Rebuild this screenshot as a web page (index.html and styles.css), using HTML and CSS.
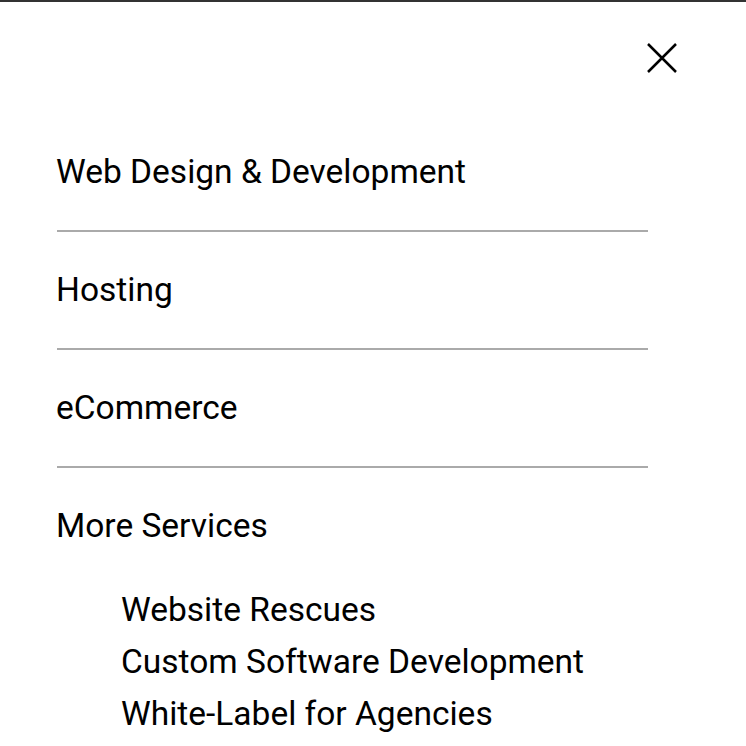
FILE: index.html
```html
<!DOCTYPE html>
<html lang="en">
<head>
  <meta charset="UTF-8">
  <meta name="viewport" content="width=device-width, initial-scale=1.0">
  <title>Menu</title>
  <link rel="stylesheet" href="styles.css">
</head>
<body>
  <div class="menu-panel">
    <div class="menu-top">
      <button class="close-btn" aria-label="Close menu">
        <svg width="32" height="32" viewBox="0 0 32 32">
          <path d="M2 2 L30 30 M30 2 L2 30" stroke="#000" stroke-width="2.5" fill="none"/>
        </svg>
      </button>
    </div>

    <ul class="menu-list">
      <li class="menu-item"><a href="#">Web Design &amp; Development</a></li>
      <li class="menu-item"><a href="#">Hosting</a></li>
      <li class="menu-item"><a href="#">eCommerce</a></li>
      <li class="menu-item last">
        <a href="#">More Services</a>
        <ul class="sub-list">
          <li><a href="#">Website Rescues</a></li>
          <li><a href="#">Custom Software Development</a></li>
          <li><a href="#">White-Label for Agencies</a></li>
        </ul>
      </li>
    </ul>
  </div>
</body>
</html>
```

FILE: styles.css
```css
body {
  margin: 0;
  padding: 0;
  background: #fff;
  font-family: Roboto, "Liberation Sans", sans-serif;
  color: #000;
}

.menu-panel {
  border-top: 2px solid #333;
  padding: 0 98px 0 57px;
  height: 744px;
  overflow: hidden;
}

.menu-top {
  display: flex;
  justify-content: flex-end;
  padding-top: 40px;
  margin-right: -30px;
  margin-bottom: 40px;
}

.close-btn {
  background: none;
  border: none;
  padding: 0;
  cursor: pointer;
  width: 32px;
  height: 32px;
}

.menu-list {
  list-style: none;
  margin: 0;
  padding: 0;
}

.menu-item {
  border-bottom: 2px solid #aaa;
  padding: 40px 0 40px;
}

.menu-item.last {
  border-bottom: none;
}

.menu-item > a {
  display: block;
  margin-left: -1px;
  font-size: 33.5px;
  line-height: 36px;
  color: #000;
  text-decoration: none;
}

.sub-list {
  list-style: none;
  margin: 40px 0 0;
  padding: 0 0 0 64px;
}

.sub-list a {
  display: block;
  font-size: 33.5px;
  line-height: 52px;
  color: #000;
  text-decoration: none;
}
```
